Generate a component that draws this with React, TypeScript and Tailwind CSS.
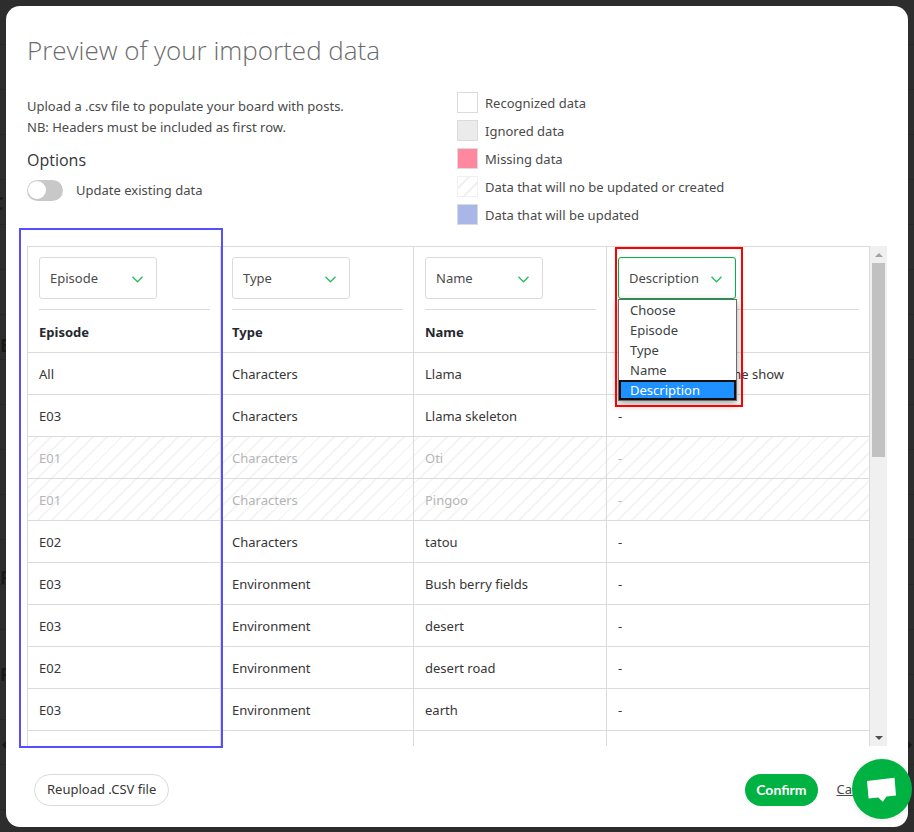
type Row = { cells: string[]; skipped?: boolean };

const columns = ['Episode', 'Type', 'Name', 'Description'];
const choices = ['Choose', ...columns];

const rows: Row[] = [
  { cells: ['All', 'Characters', 'Llama', 'Main character of the show'] },
  { cells: ['E03', 'Characters', 'Llama skeleton', '-'] },
  { cells: ['E01', 'Characters', 'Oti', '-'], skipped: true },
  { cells: ['E01', 'Characters', 'Pingoo', '-'], skipped: true },
  { cells: ['E02', 'Characters', 'tatou', '-'] },
  { cells: ['E03', 'Environment', 'Bush berry fields', '-'] },
  { cells: ['E03', 'Environment', 'desert', '-'] },
  { cells: ['E02', 'Environment', 'desert road', '-'] },
  { cells: ['E03', 'Environment', 'earth', '-'] },
  { cells: ['', '', '', ''] },
];

const legend = [
  { label: 'Recognized data', swatch: 'border-[#dbdbdb] bg-white' },
  { label: 'Ignored data', swatch: 'border-[#dbdbdb] bg-[#ebebeb]' },
  { label: 'Missing data', swatch: 'border-[#dbdbdb] bg-[#ff889e]' },
  {
    label: 'Data that will no be updated or created',
    swatch:
      'border-[#f0f0f0] bg-[repeating-linear-gradient(-45deg,#fff_0px,#fff_8px,#f0f0f0_8px,#f0f0f0_10px)]',
  },
  { label: 'Data that will be updated', swatch: 'border-[#dbdbdb] bg-[#a9b7e8]' },
];

function ColumnSelect({ value, open }: { value: string; open?: boolean }) {
  return (
    <div className="relative w-[118px]">
      <select
        aria-label={`Field for column ${value}`}
        defaultValue={value}
        className={`block h-[42px] w-full appearance-none rounded-[3px] border bg-white pl-2.5 pr-8 pt-0.5 text-[#4a4a4a] outline-none ${
          open ? 'border-[#00b242]' : 'border-[#dbdbdb]'
        }`}
      >
        {choices.map((c) => (
          <option key={c}>{c}</option>
        ))}
      </select>
      <svg
        className="pointer-events-none absolute right-3.5 top-[19px] h-[7px] w-[11px]"
        viewBox="0 0 11 7"
        fill="none"
        stroke="#28bd60"
        strokeWidth="1.3"
      >
        <path d="M0.5 0.8 5.5 5.8 10.5 0.8" />
      </svg>
      {open && (
        <>
          <ul
            role="listbox"
            aria-label="Fields"
            className="absolute left-0 top-[42px] z-20 w-[119px] border border-[#6b6b6b] bg-white leading-5 text-[#3a3f44] shadow-[0_3px_8px_rgba(0,0,0,0.35)]"
          >
            {choices.map((c) => (
              <li
                key={c}
                role="option"
                aria-selected={c === value}
                className={
                  c === value
                    ? 'h-5 border-2 border-[#101010] bg-[#1e90ff] pl-[9px] leading-4 text-white'
                    : 'h-5 pl-[11px]'
                }
              >
                {c}
              </li>
            ))}
          </ul>
          <div className="pointer-events-none absolute -left-[3px] -top-2.5 z-30 h-40 w-32 border-2 border-[#ff0000]" />
        </>
      )}
    </div>
  );
}

function Backdrop() {
  const letters = 'absolute font-bold text-lg leading-none text-[#191919]';
  return (
    <div className="pointer-events-none absolute inset-0 overflow-hidden bg-[repeating-linear-gradient(#2d2d2d_0px,#2d2d2d_44px,#272727_44px,#272727_45px)]">
      <span className={`${letters} -left-2 top-[194px]`}>C</span>
      <span className={`${letters} left-0 top-[336px]`}>E</span>
      <span className={`${letters} left-0 top-[568px]`}>P</span>
      <span className={`${letters} left-0 top-[665px]`}>P</span>
      <span className="absolute left-0.5 top-[741px] border-y-4 border-r-4 border-y-transparent border-r-[#191919]" />
      <span className="absolute right-0.5 top-[741px] border-y-4 border-l-4 border-y-transparent border-l-[#191919]" />
    </div>
  );
}

export default function App() {
  return (
    <div className="relative min-h-screen bg-[#2d2d2d] px-1.5 py-1.5 pb-[5px] font-['Noto_Sans','Segoe_UI',sans-serif] text-[13px] text-[#4a4a4a]">
      <Backdrop />
      <main
        role="dialog"
        aria-labelledby="title"
        className="relative rounded-[14px] bg-white p-[21px]"
      >
        <h1
          id="title"
          className="font-['Open_Sans','Segoe_UI',sans-serif] text-[26px] font-light leading-[46px] text-[#6b6b6b]"
        >
          Preview of your imported data
        </h1>

        <div className="mt-[19px] grid grid-cols-2">
          <section className="pt-1">
            <p className="leading-[21px]">
              Upload a .csv file to populate your board with posts.
              <br />
              NB: Headers must be included as first row.
            </p>
            <h2 className="mt-2.5 font-['Open_Sans','Segoe_UI',sans-serif] text-base leading-6 text-[#363636]">
              Options
            </h2>
            <label className="mt-[7px] flex h-[22px] items-center gap-[13px]">
              <input type="checkbox" className="peer sr-only" />
              <span className="flex h-[21px] w-9 items-center rounded-full bg-[#c8c8c8] p-px peer-checked:justify-end peer-checked:bg-[#00b242]">
                <span className="h-[18px] w-[18px] rounded-full bg-white" />
              </span>
              <span className="pt-0.5">Update existing data</span>
            </label>
          </section>

          <ul className="flex flex-col gap-[7px]">
            {legend.map((item) => (
              <li key={item.label} className="flex h-[21px] items-center gap-[7px]">
                <span className={`h-[21px] w-[21px] border ${item.swatch}`} />
                <span className="pt-0.5">{item.label}</span>
              </li>
            ))}
          </ul>
        </div>

        <div className="relative mt-[21px]">
          <div className="flex h-[500px] overflow-hidden">
            <div className="min-w-0 flex-1">
              <table className="w-full table-fixed border-separate border-spacing-0 text-left text-[#363636]">
                <colgroup>
                  <col className="w-[193px]" />
                  <col className="w-[193px]" />
                  <col className="w-[193px]" />
                  <col />
                </colgroup>
                <thead>
                  <tr>
                    {columns.map((c) => (
                      <th
                        key={c}
                        className="border-y border-l border-[#dbdbdb] pb-0 pl-[11px] pr-2.5 pt-2.5 align-top font-normal last:border-r"
                      >
                        <ColumnSelect value={c} open={c === 'Description'} />
                        <div className="mt-2.5 h-[43px] border-t border-[#dbdbdb] font-bold leading-[44px] text-[#25282f]">
                          {c === 'Description' ? '' : c}
                        </div>
                      </th>
                    ))}
                  </tr>
                </thead>
                <tbody>
                  {rows.map((row, i) => (
                    <tr
                      key={i}
                      className={
                        row.skipped
                          ? 'bg-[repeating-linear-gradient(-45deg,#fff_0px,#fff_8px,#f5f5f5_8px,#f5f5f5_10px)] text-[#b5b5b5]'
                          : ''
                      }
                    >
                      {row.cells.map((cell, j) => (
                        <td
                          key={j}
                          className="h-[42px] whitespace-nowrap border-b border-l border-[#dbdbdb] pb-0 pl-[11px] pr-2.5 pt-0.5 last:border-r"
                        >
                          {cell}
                        </td>
                      ))}
                    </tr>
                  ))}
                </tbody>
              </table>
            </div>
            <div className="flex w-[17px] flex-col items-center bg-[#f0f0f0]">
              <span className="flex h-[17px] items-center">
                <span className="border-x-4 border-b-4 border-x-transparent border-b-[#a3a3a3]" />
              </span>
              <span className="h-[194px] w-[13px] bg-[#c1c1c1]" />
              <span className="mt-auto flex h-[17px] items-center">
                <span className="border-x-4 border-t-4 border-x-transparent border-t-[#505050]" />
              </span>
            </div>
          </div>
          <div className="pointer-events-none absolute -bottom-0.5 -left-2 -top-[18px] w-[204px] border-2 border-[#544fff]" />
        </div>

        <footer className="mt-7 flex items-center pl-[7px] pr-2.5">
          <button className="h-8 rounded-full border border-[#dbdbdb] bg-white px-3 text-[#363636]">
            Reupload .CSV file
          </button>
          <button className="ml-auto h-8 rounded-full bg-[#00b242] px-[11px] font-['Lato',sans-serif] text-sm font-bold text-white">
            Confirm
          </button>
          <a href="#" className="ml-[19px] underline">
            Cancel
          </a>
        </footer>
      </main>

      <button
        aria-label="Open chat"
        className="fixed bottom-[13px] right-0.5 z-40 h-[60px] w-[60px] rounded-full bg-[#00b242] shadow-[0_1px_6px_rgba(0,0,0,0.1)]"
      >
        <svg viewBox="0 0 60 60" className="h-full w-full" fill="#fff">
          <path d="M15 22 42.5 18.8 44 36.5 34.5 37.6 30.8 42.8 26.2 38.6 16.6 39.4Z" />
        </svg>
      </button>
    </div>
  );
}
